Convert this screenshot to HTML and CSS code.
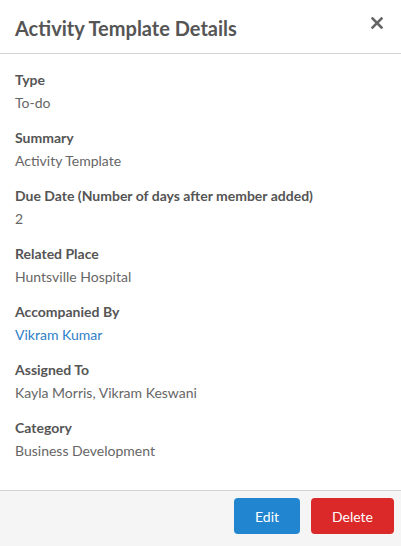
FILE: index.html
```html
<!DOCTYPE html>
<html lang="en">
<head>
  <meta charset="UTF-8" />
  <meta name="viewport" content="width=device-width, initial-scale=1.0" />
  <title>Activity Template Details</title>
  <link rel="stylesheet" href="styles.css">
</head>
<body>
  <div class="modal">
    <header class="modal-header">
      <h2>Activity Template Details</h2>
      <button class="close" aria-label="Close">
        <svg width="12" height="12" viewBox="0 0 12 12"><path d="M1.5 1.5 L10.5 10.5 M10.5 1.5 L1.5 10.5" stroke="#666" stroke-width="2.6" stroke-linecap="square"/></svg>
      </button>
    </header>
    <div class="modal-body">
      <div class="field">
        <div class="label">Type</div>
        <div class="value">To-do</div>
      </div>
      <div class="field">
        <div class="label">Summary</div>
        <div class="value">Activity Template</div>
      </div>
      <div class="field">
        <div class="label">Due Date (Number of days after member added)</div>
        <div class="value">2</div>
      </div>
      <div class="field">
        <div class="label">Related Place</div>
        <div class="value">Huntsville Hospital</div>
      </div>
      <div class="field">
        <div class="label">Accompanied By</div>
        <div class="value"><a href="#">Vikram Kumar</a></div>
      </div>
      <div class="field">
        <div class="label">Assigned To</div>
        <div class="value">Kayla Morris, Vikram Keswani</div>
      </div>
      <div class="field">
        <div class="label">Category</div>
        <div class="value">Business Development</div>
      </div>
    </div>
    <footer class="modal-footer">
      <button class="btn btn-blue">Edit</button>
      <button class="btn btn-red">Delete</button>
    </footer>
  </div>
</body>
</html>
```

FILE: styles.css
```css
body {
  margin: 0;
  font-family: Lato, "Open Sans", sans-serif;
  background: #fff;
  color: #555;
}
.modal {
  width: 401px;
}
.modal-header {
  display: flex;
  align-items: center;
  justify-content: space-between;
  padding: 17px 15px 14px 15px;
  height: 22px;
  border-bottom: 1px solid #d4d4d4;
}
.modal-header h2 {
  margin: 0;
  font-size: 20px;
  font-weight: 700;
  line-height: 22px;
  color: #555;
}
.close {
  border: none;
  background: none;
  padding: 0;
  margin-top: -10px;
  margin-right: 3px;
  cursor: pointer;
  display: flex;
}
.modal-body {
  padding: 16px 15px 14px;
}
.field {
  margin-bottom: 15px;
}
.label {
  font-size: 14px;
  font-weight: 700;
  line-height: 20px;
  color: #555;
  margin-bottom: 3px;
}
.value {
  font-size: 14px;
  line-height: 20px;
  color: #666;
}
.value a {
  color: #2f80c8;
  text-decoration: none;
}
.modal-footer {
  display: flex;
  justify-content: flex-end;
  gap: 11px;
  padding: 7px 7px 12px;
  background: #f5f5f5;
  border-top: 1px solid #d4d4d4;
}
.btn {
  height: 36px;
  padding: 0 21px;
  border: none;
  border-radius: 4px;
  font-family: Lato, "Open Sans", sans-serif;
  font-size: 14px;
  color: #fff;
  cursor: pointer;
}
.btn-blue {
  background: #2185d0;
}
.btn-red {
  background: #db2828;
}
```
